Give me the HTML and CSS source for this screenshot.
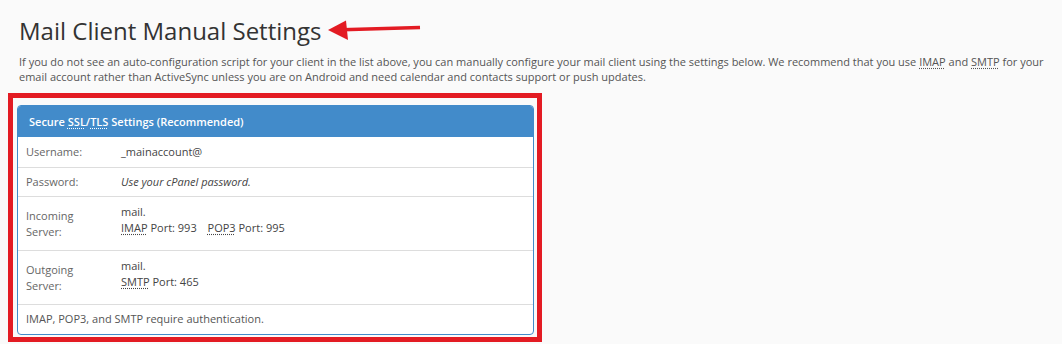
FILE: index.html
```html
<!DOCTYPE html>
<html lang="en">
<head>
    <meta charset="UTF-8">
    <title>Mail Client Manual Settings</title>
    <link rel="stylesheet" href="styles.css">
</head>
<body>
    <div class="page">
        <div class="title-row">
            <h2 class="title">Mail Client Manual Settings</h2>
            <svg class="arrow" width="94" height="22" viewBox="0 0 94 22">
                <line x1="14" y1="10.8" x2="92" y2="8.5" stroke="#e31b23" stroke-width="3.4"/>
                <polygon points="0,11 18,1.5 20,21" fill="#e31b23"/>
            </svg>
        </div>
        <p class="intro">If you do not see an auto-configuration script for your client in the list above, you can manually configure your mail client using the settings below. We recommend that you use <abbr>IMAP</abbr> and <abbr>SMTP</abbr> for your email account rather than ActiveSync unless you are on Android and need calendar and contacts support or push updates.</p>

        <div class="highlight">
            <div class="panel">
                <div class="panel-heading">Secure <abbr>SSL</abbr>/<abbr>TLS</abbr> Settings (Recommended)</div>
                <div class="row first">
                    <div class="label">Username:</div>
                    <div class="value">_mainaccount@</div>
                </div>
                <div class="row">
                    <div class="label">Password:</div>
                    <div class="value"><em>Use your cPanel password.</em></div>
                </div>
                <div class="row tall">
                    <div class="label">Incoming<br>Server:</div>
                    <div class="value">mail.<br><abbr>IMAP</abbr> Port: 993 <span class="gap"></span><abbr>POP3</abbr> Port: 995</div>
                </div>
                <div class="row tall">
                    <div class="label">Outgoing<br>Server:</div>
                    <div class="value">mail.<br><abbr>SMTP</abbr> Port: 465</div>
                </div>
                <div class="row footer">IMAP, POP3, and SMTP require authentication.</div>
            </div>
        </div>
    </div>
</body>
</html>
```

FILE: styles.css
```css
body {
    margin: 0;
    background-color: #fafafa;
    font-family: "Open Sans", sans-serif;
    color: #333;
}
.page {
    padding: 0 0 0 8px;
}
.title-row {
    display: flex;
    align-items: center;
    gap: 7px;
    padding: 14px 0 0 11px;
}
.title {
    margin: 0;
    font-size: 24px;
    font-weight: 400;
    line-height: 34px;
    color: #333;
}
.arrow {
    display: block;
    margin-top: -3px;
}
.intro {
    margin: 6px 0 0 11px;
    font-size: 11px;
    line-height: 15px;
    color: #555;
}
abbr {
    text-decoration: underline dotted;
    text-underline-offset: 2px;
}
.highlight {
    width: 517px;
    margin-top: 9px;
    border: 5px solid #e31b23;
    padding: 7px 3px 2px 4px;
}
.panel {
    background-color: #fff;
    border: 1px solid #428bca;
    border-radius: 4px;
    overflow: hidden;
    font-size: 11px;
    line-height: 16px;
}
.panel-heading {
    background-color: #428bca;
    color: #fff;
    font-weight: 600;
    padding: 8px 11px 7px;
}
.row {
    display: flex;
    padding: 6px 8px;
    border-top: 1px solid #ddd;
    color: #555;
}
.row.first {
    border-top: none;
    padding: 7px 8px;
}
.label {
    width: 95px;
    flex-shrink: 0;
    color: #666;
}
.value {
    color: #444;
}
.tall {
    padding: 7px 8px 10px;
}
.tall .label {
    padding-top: 4px;
}
.gap {
    display: inline-block;
    width: 8px;
}
.footer {
    padding: 6px 8px 7px;
    color: #555;
}
```
